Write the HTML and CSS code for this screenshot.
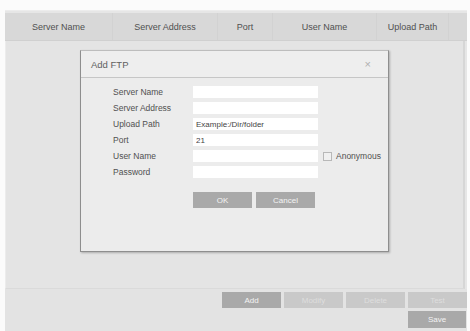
FILE: index.html
```html
<!DOCTYPE html>
<html lang="en">
<head>
  <meta charset="UTF-8">
  <meta name="viewport" content="width=device-width, initial-scale=1.0">
  <title>FTP Settings</title>
  <link rel="stylesheet" href="styles.css">
</head>
<body>
  <div class="panel">
    <!-- List header -->
    <div class="list-header">
      <div class="col">Server Name</div>
      <div class="col">Server Address</div>
      <div class="col">Port</div>
      <div class="col">User Name</div>
      <div class="col">Upload Path</div>
      <div class="col"></div>
    </div>
    <div class="list-body"></div>

    <!-- Bottom buttons -->
    <div class="footer">
      <div class="btn-row">
        <button class="btn">Add</button>
        <button class="btn disabled">Modify</button>
        <button class="btn disabled">Delete</button>
        <button class="btn disabled">Test</button>
      </div>
      <div class="btn-row">
        <button class="btn">Save</button>
      </div>
    </div>

    <!-- Add FTP dialog -->
    <div class="dialog">
      <div class="dialog-title">
        <span>Add FTP</span>
        <span class="close">&times;</span>
      </div>
      <div class="dialog-body">
        <div class="form-row"><label>Server Name</label><input type="text" class="field"></div>
        <div class="form-row"><label>Server Address</label><input type="text" class="field"></div>
        <div class="form-row"><label>Upload Path</label><input type="text" class="field" value="Example:/Dir/folder"></div>
        <div class="form-row"><label>Port</label><input type="text" class="field" value="21"></div>
        <div class="form-row"><label>User Name</label><input type="text" class="field"><span class="anon"><span class="check"></span>Anonymous</span></div>
        <div class="form-row"><label>Password</label><input type="password" class="field"></div>
        <div class="dialog-buttons">
          <button class="btn">OK</button>
          <button class="btn">Cancel</button>
        </div>
      </div>
    </div>
  </div>
</body>
</html>
```

FILE: styles.css
```css
body {
  margin: 0;
  background: #fbfbfb;
  font-family: "Liberation Sans", Arial, sans-serif;
  font-size: 9px;
  color: #555;
}
.panel {
  position: relative;
  margin: 10px 3px 0 5px;
  height: 321px;
  background: #e6e6e6;
  border-top: 1px solid #ececec;
  padding-top: 2px;
  display: flex;
  flex-direction: column;
}
.list-header {
  display: grid;
  grid-template-columns: 108px 105px 55px 104px 72px 1fr;
  height: 27px;
  background: #d8d8d8;
  border-bottom: 1px solid #d0d0d0;
}
.col {
  display: flex;
  align-items: center;
  justify-content: center;
  border-right: 1px solid #d2d2d2;
  color: #505050;
}
.col:last-child {
  border-right: none;
}
.list-body {
  height: 247px;
  background: #e4e4e4;
  border-left: 1px solid #ececec;
  border-right: 2px solid #d6d6d6;
  border-bottom: 1px solid #dadada;
  margin-right: 2px;
}
.footer {
  flex: 1;
  background: #e3e3e3;
  padding-top: 3px;
  display: flex;
  flex-direction: column;
  gap: 3px;
}
.btn-row {
  display: flex;
  justify-content: flex-end;
  gap: 3px;
}
.btn {
  width: 59px;
  height: 16px;
  border: none;
  padding: 0;
  background: #a9a9a9;
  color: #f4f4f4;
  font-family: "Liberation Sans", Arial, sans-serif;
  font-size: 8px;
}
.btn.disabled {
  background: #c9c9c9;
  color: #dedede;
}
.btn-row:last-child .btn {
  height: 17px;
  width: 58px;
  margin-right: 1px;
}
.dialog {
  position: absolute;
  left: 75px;
  top: 39px;
  width: 307px;
  height: 200px;
  background: #ececec;
  border: 1px solid #8e8e8e;
  border-top-color: #bdbdbd;
  box-shadow: 1px 1px 2px rgba(0, 0, 0, 0.25);
}
.dialog-title {
  height: 26px;
  border-bottom: 1px solid #c6c6c6;
  background: #eeeeee;
  display: flex;
  align-items: center;
  justify-content: space-between;
  padding: 0 17px 0 10px;
  font-size: 9.5px;
  color: #606060;
}
.close {
  color: #b0b0b0;
  font-size: 11px;
}
.dialog-body {
  padding: 6px 0 0 32px;
}
.form-row {
  display: flex;
  align-items: center;
  height: 16px;
}
.form-row label {
  width: 80px;
  font-size: 8.5px;
  color: #505050;
}
.field {
  width: 125px;
  height: 12px;
  box-sizing: border-box;
  border: none;
  background: #fff;
  padding: 0 3px;
  font-family: "Liberation Sans", Arial, sans-serif;
  font-size: 8px;
  color: #444;
}
.anon {
  display: flex;
  align-items: center;
  margin-left: 5px;
  font-size: 8.5px;
  color: #505050;
}
.check {
  width: 7px;
  height: 7px;
  border: 1px solid #b8b8b8;
  background: #f0f0f0;
  margin-right: 4px;
}
.dialog-buttons {
  display: flex;
  gap: 4px;
  margin: 12px 0 0 80px;
}
```
